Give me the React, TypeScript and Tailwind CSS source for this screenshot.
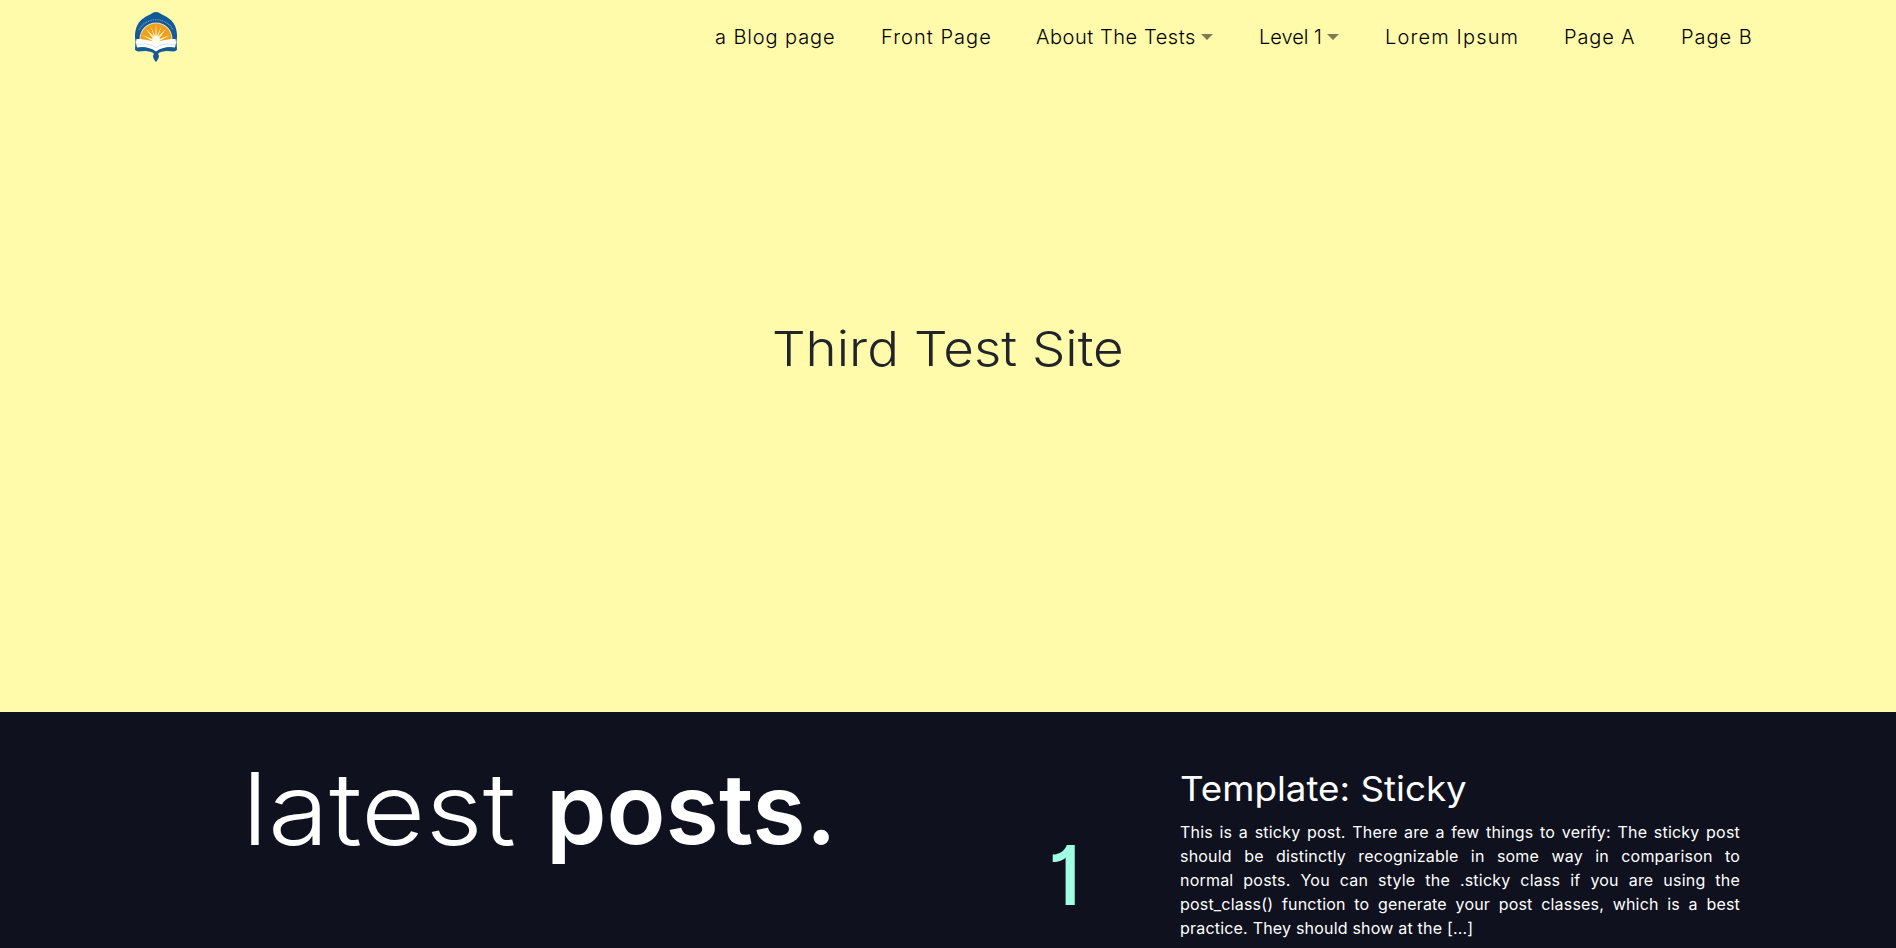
const links = [
  { label: "a Blog page", box: "w-[166px]", text: "tracking-[0.9px]" },
  { label: "Front Page", box: "w-[155px]", text: "tracking-[1.05px]" },
  { label: "About The Tests", box: "w-[223px]", text: "tracking-[0.55px]", menu: true },
  { label: "Level 1", box: "w-[126px]", text: "tracking-[0px]", menu: true },
  { label: "Lorem Ipsum", box: "w-[179px]", text: "tracking-[1.15px]" },
  { label: "Page A", box: "w-[117px]", text: "tracking-[0.85px]" },
  { label: "Page B", box: "w-[72px]", text: "tracking-[1px]" },
];

const excerpt = [
  "This is a sticky post. There are a few things to verify: The sticky post",
  "should be distinctly recognizable in some way in comparison to",
  "normal posts. You can style the .sticky class if you are using the",
  "post_class() function to generate your post classes, which is a best",
];

function Logo() {
  return (
    <svg viewBox="0 0 42 50" className="h-[50px] w-[42px]" aria-hidden="true">
      <path d="M1 31C-1 25 0 17 3 12C6 7 10 5 14 3C17 1.500 18 0 21 0C24 0 25 1.500 28 3C32 5 36 7 39 12C42 17 43 25 41 31Z" fill="#145a96" />
      <path d="M4 18A18.500 17 0 0 1 38 18" fill="none" stroke="#6f9bb8" strokeWidth="1.300" strokeDasharray="1 0.8" />
      <path d="M4.500 31V27A16.500 16.500 0 0 1 37.500 27V31Z" fill="#dfe3c8" />
      <path d="M5.500 33V27A15.500 15.500 0 0 1 36.500 27V33Z" fill="#f0a01f" />
      <g fill="#fff3c0">
        <path d="M7 23L20 28L19 30ZM11 17L21.500 27L19.500 29ZM15.500 14L22 28H20ZM21 12L22 28H20ZM26.500 14L22 28H20ZM31 17L22.500 29L20.500 27ZM35 23L23 30L22 28Z" />
      </g>
      <circle cx="21" cy="28" r="3.800" fill="#fffbe4" />
      <path d="M1.500 27C8 27 16 28 21 31C26 28 34 27 40.500 27L42 37C34 34.500 26 36 21 40C16 36 8 34.500 0 37Z" fill="#fff" />
      <path d="M2 33C10 31 17 32 21 36C25 32 32 31 40 33" fill="none" stroke="#c9d8e2" strokeWidth="0.700" />
      <path d="M0.500 29L2 35.500C8 34 16 35.500 21 39.500C26 35.500 34 34 40 35.500L41.500 29L42 37.500C40 41 36 38.500 31 39C27 39.500 24 40 23 42C25 44 23.500 47 21 50C18.500 47 17 44 19 42C18 40 15 39.500 11 39C6 38.500 2 41 0 37.500Z" fill="#145a96" />
    </svg>
  );
}

export default function App() {
  return (
    <div className="h-[948px] overflow-hidden bg-[#fffbab] font-['Inter',sans-serif]">
      <header className="flex h-[712px] flex-col">
        <nav className="flex h-[74px] items-center pl-[135px]">
          <Logo />
          <ul className="ml-[538px] flex text-[20px] leading-[30px] font-light text-black">
            {links.map((l) => (
              <li key={l.label} className={`flex items-center whitespace-nowrap ${l.box}`}>
                <span className={l.text}>{l.label}</span>
                {l.menu && (
                  <span className="ml-[5px] border-x-[6px] border-t-[6px] border-x-transparent border-t-[#7d7b54]" />
                )}
              </li>
            ))}
          </ul>
        </nav>
        <h1 className="mt-[245px] ml-[772px] w-max origin-left scale-x-[1.09] text-[48.5px] leading-[60px] font-light whitespace-nowrap text-[#212529]">
          Third Test Site
        </h1>
      </header>
      <section className="flex h-[236px] bg-[#0f111e] text-white">
        <h2 className="mt-[37px] ml-[242px] flex w-[806px] text-[98px] leading-[120px] whitespace-nowrap">
          <span className="w-[304px] origin-left scale-x-[1.11] text-[100px] font-light">latest</span>
          <span className="w-max origin-left scale-x-[0.99] font-semibold">posts.</span>
        </h2>
        <span className="mt-[115px] w-[132px] text-[82px] leading-[98px] font-medium text-[#a0ffe3] [font-feature-settings:'cv01']">
          1
        </span>
        <article className="mt-[56px] w-[560px]">
          <h3 className="w-max origin-left scale-x-[1.068] text-[34.4px] leading-[42px] font-normal whitespace-nowrap">
            Template: Sticky
          </h3>
          <p className="mt-[10px] text-[16px] leading-[24px] tracking-[0.2px]">
            {excerpt.map((line) => (
              <span key={line} className="block [text-align-last:justify]">
                {line}{" "}
              </span>
            ))}
            <span className="block">practice. They should show at the [...]</span>
          </p>
        </article>
      </section>
    </div>
  );
}
